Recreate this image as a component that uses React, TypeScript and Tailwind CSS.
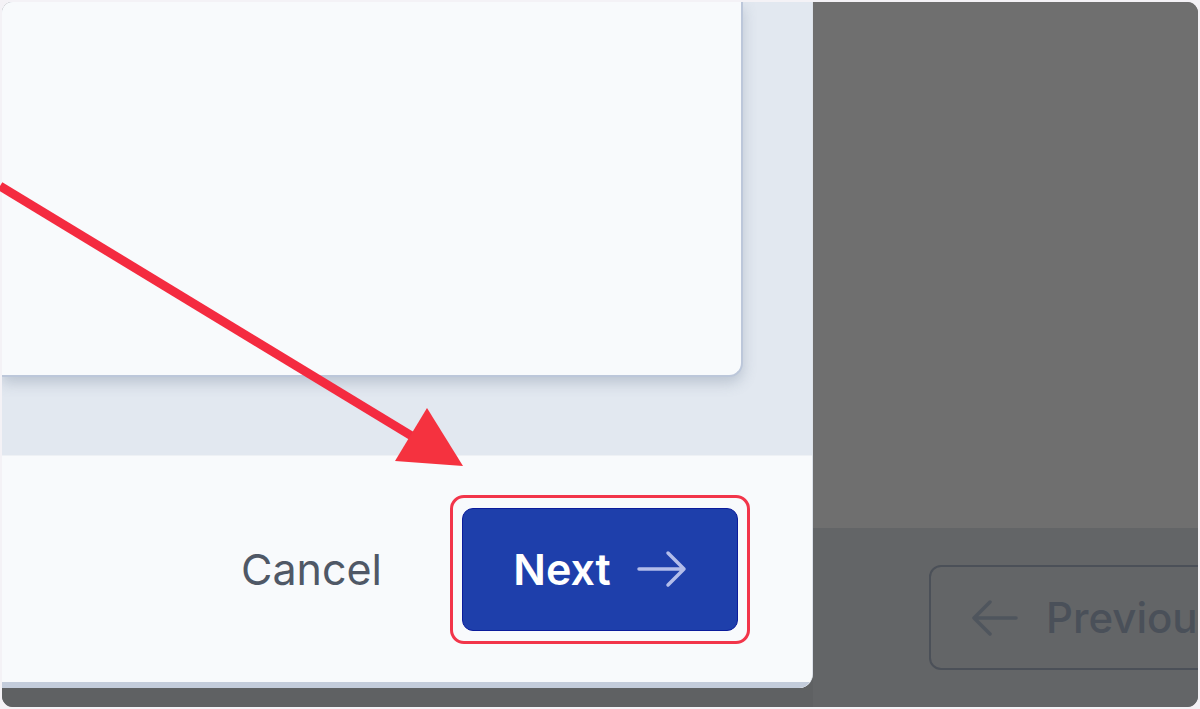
import React from "react";

export default function App() {
  return (
    <div className="w-[1200px] h-[709px] bg-[#f4f2f6] p-[2px] relative" style={{ fontFamily: "Inter, 'Noto Sans', sans-serif" }}>
      <div className="flex h-full w-full rounded-[11px] overflow-hidden bg-[#6f6f6f]">
        {/* Left column: dialog + strip below */}
        <div className="flex flex-col w-[811px] shrink-0 bg-[#5f6163]">
          <div className="flex flex-col h-[686px] bg-[#f8fafc] rounded-br-[14px] border-r border-[#dde2e9] overflow-hidden">
            {/* content area */}
            <div className="h-[453px] bg-[#e2e8f0] flex items-start">
              <div className="w-[741px] h-[375px] bg-[#f8fafc] rounded-br-[14px] border-r-2 border-b-2 border-[#bcc7da] shadow-[0_6px_14px_rgba(100,116,139,0.3)]" />
            </div>
            {/* footer */}
            <div className="flex-1 bg-[#f8fafc] border-t border-[#eef1f5] border-b-[6px] border-b-[#c3ccdb] flex items-center justify-end pr-[62px] gap-[68px]">
              <span className="text-[43px] text-[#4f5866] leading-none">Cancel</span>
              <div className="rounded-[14px] border-[3px] border-[#f2354a] px-[9px] py-[10px]">
                <div className="w-[276px] h-[123px] rounded-[11px] bg-[#1e3fab] border-[1.5px] border-[#0b1c9c] flex items-center justify-center gap-[26px]">
                  <span className="text-[43px] font-semibold text-white leading-none">Next</span>
                  <svg width="50" height="38" viewBox="0 0 50 38" fill="none">
                    <path d="M2 19 H47 M31 3 L47 19 L31 35" stroke="#b3bdea" strokeWidth="3.5" strokeLinecap="round" strokeLinejoin="round" />
                  </svg>
                </div>
              </div>
            </div>
          </div>
        </div>
        {/* Right column: overlay + page footer */}
        <div className="flex-1 flex flex-col">
          <div className="flex-1 bg-[#6f6f6f]" />
          <div className="h-[179px] bg-[#636567] flex items-center pl-[116px] overflow-hidden">
            <div className="shrink-0 h-[105px] w-[320px] rounded-[12px] border-2 border-[#4b5058] flex items-center pl-[41px] gap-[28px]">
              <svg width="46" height="38" viewBox="0 0 46 38" fill="none">
                <path d="M44 19 H2 M18 3 L2 19 L18 35" stroke="#4f555d" strokeWidth="3.5" strokeLinecap="round" strokeLinejoin="round" />
              </svg>
              <span className="text-[42px] font-medium text-[#4a5059] leading-none">Previous</span>
            </div>
          </div>
        </div>
      </div>
      {/* red annotation arrow */}
      <svg className="absolute left-0 top-0 pointer-events-none" width="1200" height="709" viewBox="0 0 1200 709">
        <line x1="0" y1="186" x2="420" y2="441" stroke="#f42b40" strokeWidth="9" />
        <polygon points="427,408 395,461 463,466" fill="#f5323f" />
      </svg>
    </div>
  );
}
